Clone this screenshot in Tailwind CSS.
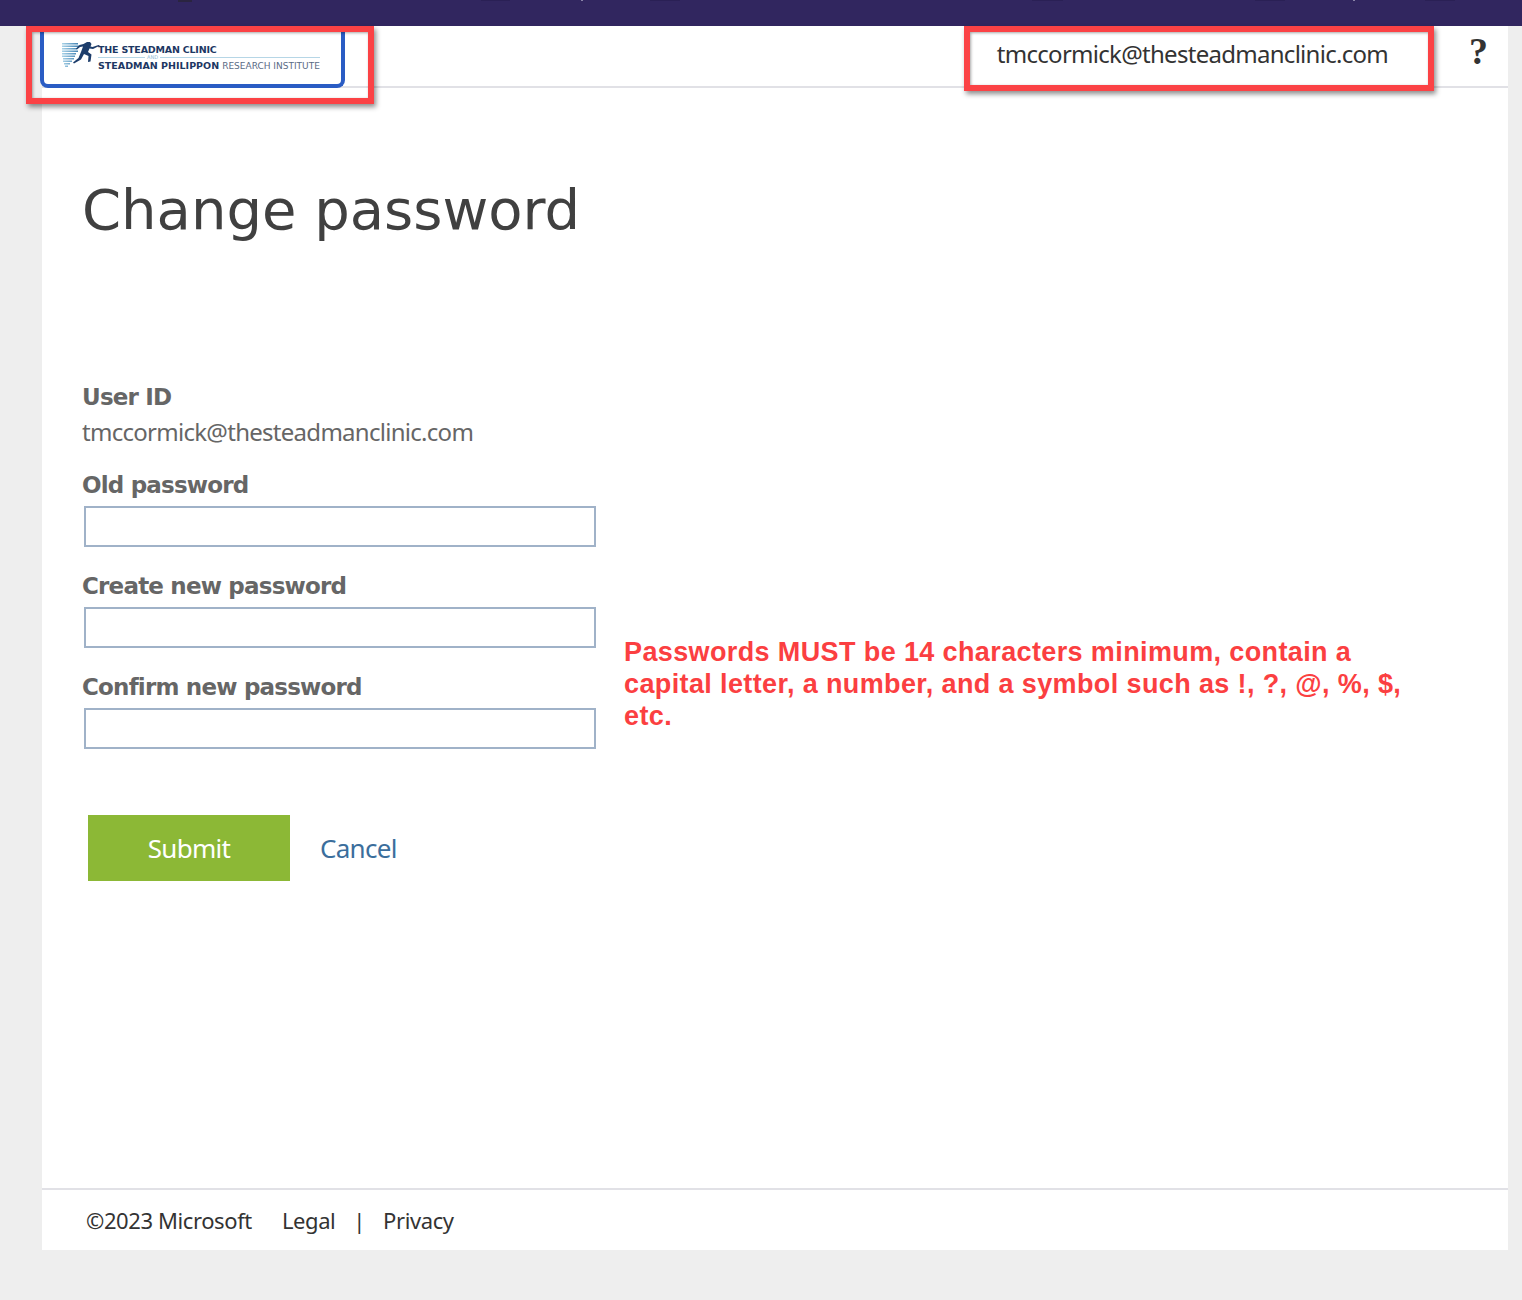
<!DOCTYPE html>
<html lang="en">
<head>
  <meta charset="UTF-8" />
  <meta name="viewport" content="width=device-width, initial-scale=1.0" />
  <title>Change password</title>
  <script src="https://cdn.jsdelivr.net/npm/@tailwindcss/browser@4"></script>
</head>
<body class="bg-[#eeeeee] font-['Noto_Sans',sans-serif] text-[#333333]">
  <div class="relative w-[1522px] h-[1300px] overflow-hidden">
    <!-- top bar, with the bottoms of the cut-off nav items -->
    <div class="relative h-[26px] bg-[#31265f]">
      <div class="absolute left-[178px] top-0 w-[14px] h-[2px] bg-[#2a2440]"></div>
      <div class="absolute left-[481px] top-0 w-[29px] h-px bg-[#2a2055]"></div>
      <div class="absolute left-[581px] top-0 w-[2px] h-px bg-[#8a84a8]"></div>
      <div class="absolute left-[650px] top-0 w-[30px] h-px bg-[#2a2055]"></div>
      <div class="absolute left-[1032px] top-0 w-[31px] h-px bg-[#2a2055]"></div>
      <div class="absolute left-[1255px] top-0 w-[30px] h-px bg-[#2a2055]"></div>
      <div class="absolute left-[1353px] top-0 w-[2px] h-px bg-[#8a84a8]"></div>
      <div class="absolute left-[1425px] top-0 w-[30px] h-px bg-[#2a2055]"></div>
    </div>

    <!-- panel -->
    <div class="ml-[42px] w-[1466px] h-[1224px] bg-white flex flex-col">
      <header class="h-[62px] shrink-0 border-b-2 border-[#e1e1e6] flex justify-end">
        <div class="text-[24px] leading-[56px] tracking-[-0.72px] mr-[120px]">tmccormick@thesteadmanclinic.com</div>
      </header>

      <main class="flex-1 pl-[40px]">
        <h1 class="mt-[86px] text-[56px] leading-[72px] text-[#404040] font-['DejaVu_Sans',sans-serif]">Change password</h1>

        <div class="mt-[135px] flex">
          <form class="w-[514px] text-[#666666]">
            <label class="block text-[23px] leading-[32px] tracking-[-0.8px] font-bold font-['DejaVu_Sans',sans-serif]">User ID</label>
            <p class="text-[24px] leading-[36px] tracking-[-0.72px] mt-[1px]">tmccormick@thesteadmanclinic.com</p>
            <label class="block mt-[19px] text-[23px] leading-[32px] tracking-[-0.8px] font-bold font-['DejaVu_Sans',sans-serif]">Old password</label>
            <input type="password" class="block ml-[2px] mt-[5px] w-[512px] h-[41px] border-2 border-[#a0b2c8] bg-white" />
            <label class="block mt-[23px] text-[23px] leading-[32px] tracking-[-0.8px] font-bold font-['DejaVu_Sans',sans-serif]">Create new password</label>
            <input type="password" class="block ml-[2px] mt-[5px] w-[512px] h-[41px] border-2 border-[#a0b2c8] bg-white" />
            <label class="block mt-[23px] text-[23px] leading-[32px] tracking-[-0.8px] font-bold font-['DejaVu_Sans',sans-serif]">Confirm new password</label>
            <input type="password" class="block ml-[2px] mt-[5px] w-[512px] h-[41px] border-2 border-[#a0b2c8] bg-white" />
            <div class="mt-[66px] ml-[6px] flex items-center">
              <button type="button" class="w-[202px] h-[66px] bg-[#8cb836] text-white text-[26px] tracking-[-0.7px]">Submit</button>
              <a href="#" class="ml-[30px] text-[26px] tracking-[-0.7px] text-[#3b6e9c]">Cancel</a>
            </div>
          </form>
          <p class="ml-[28px] mt-[255px] w-[800px] h-fit text-[27px] leading-[32px] tracking-[0.38px] font-bold text-[#fb3f41] font-['Liberation_Sans',sans-serif]">Passwords MUST be 14 characters minimum, contain a capital letter, a number, and a symbol such as !, ?, @, %, $, etc.</p>
        </div>
      </main>

      <footer class="h-[62px] shrink-0 border-t-2 border-[#e1e1e6] pl-[44px] flex items-center text-[22px] tracking-[-0.4px]">
        <span>©2023 Microsoft</span>
        <a href="#" class="ml-[30px]">Legal</a>
        <span class="ml-[18px]">|</span>
        <a href="#" class="ml-[18px]">Privacy</a>
      </footer>
    </div>

    <!-- logo box -->
    <div class="absolute left-[40px] top-[26px] w-[305px] h-[62px] bg-white border-[4px] border-t-0 border-[#2a5cc4] rounded-b-[8px]">
      <div class="relative w-full h-full">
        <svg class="absolute left-[18px] top-[16px]" width="38" height="28" viewBox="0 0 38 28">
          <defs>
            <linearGradient id="streak" x1="0" y1="0" x2="1" y2="0">
              <stop offset="0" stop-color="#a9d3e8" />
              <stop offset="1" stop-color="#3f7fb0" />
            </linearGradient>
          </defs>
          <path fill="url(#streak)" d="M0 1H16V2.500H0zM0 3.500H17V5H0zM0 6H15V7.500H0zM0 8.500H16V10H0zM0 11H14V12.500H0zM0 13.500H13V15H0zM1 16H12V17.500H1zM1 18.500H10V20H1zM2 21H8V22.500H2zM3 23.500H6V25H3z" />
          <path fill="#1d3d6b" d="M25 0l3 0 1.500 2-1 2.500 2 .5 6-2 1.500.5-7 3.500-3.500-.5-1.500 3.500 3.500 2.500-1 7-2.500 .5 .5-6-4.500-2-3 5.500-7 4-1-1 5.500-4.500 2.500-6 2-5.500-3 .5-3 2.500-1-1 3.500-3.500 4-1z" />
        </svg>
        <div class="absolute left-[54px] top-[18px] text-[9.500px] leading-[12px] tracking-[-0.2px] font-bold text-[#1d3763] font-['DejaVu_Sans',sans-serif] whitespace-nowrap">THE STEADMAN CLINIC</div>
        <div class="absolute left-[54px] top-[31px] w-[222px] h-px bg-[#b6d6e6]"></div>
        <div class="absolute left-[101px] top-[28px] px-[2px] bg-white text-[5px] leading-[6px] text-[#8fbad6] font-['DejaVu_Sans',sans-serif]">AND</div>
        <div class="absolute left-[54px] top-[34px] text-[9.500px] leading-[12px] whitespace-nowrap text-[#5a6b85] font-['DejaVu_Sans',sans-serif]"><span class="font-bold text-[#1d3763]">STEADMAN PHILIPPON</span> <span class="text-[9px]">RESEARCH INSTITUTE</span></div>
      </div>
    </div>

    <!-- red annotation boxes -->
    <div class="absolute left-[26px] top-[26px] w-[348px] h-[78px] border-[6px] border-[#fb4245] shadow-[2px_3px_5px_rgba(0,0,0,0.45),inset_1px_1px_3px_rgba(0,0,0,0.35)]"></div>
    <div class="absolute left-[964px] top-[26px] w-[470px] h-[65px] border-[6px] border-[#fb4245] shadow-[2px_3px_5px_rgba(0,0,0,0.45),inset_1px_1px_3px_rgba(0,0,0,0.35)]"></div>

    <!-- help -->
    <div class="absolute left-[1469px] top-[29px] text-[38px] leading-[44px] font-bold text-[#333333] font-['Liberation_Serif',serif]">?</div>
  </div>
</body>
</html>
